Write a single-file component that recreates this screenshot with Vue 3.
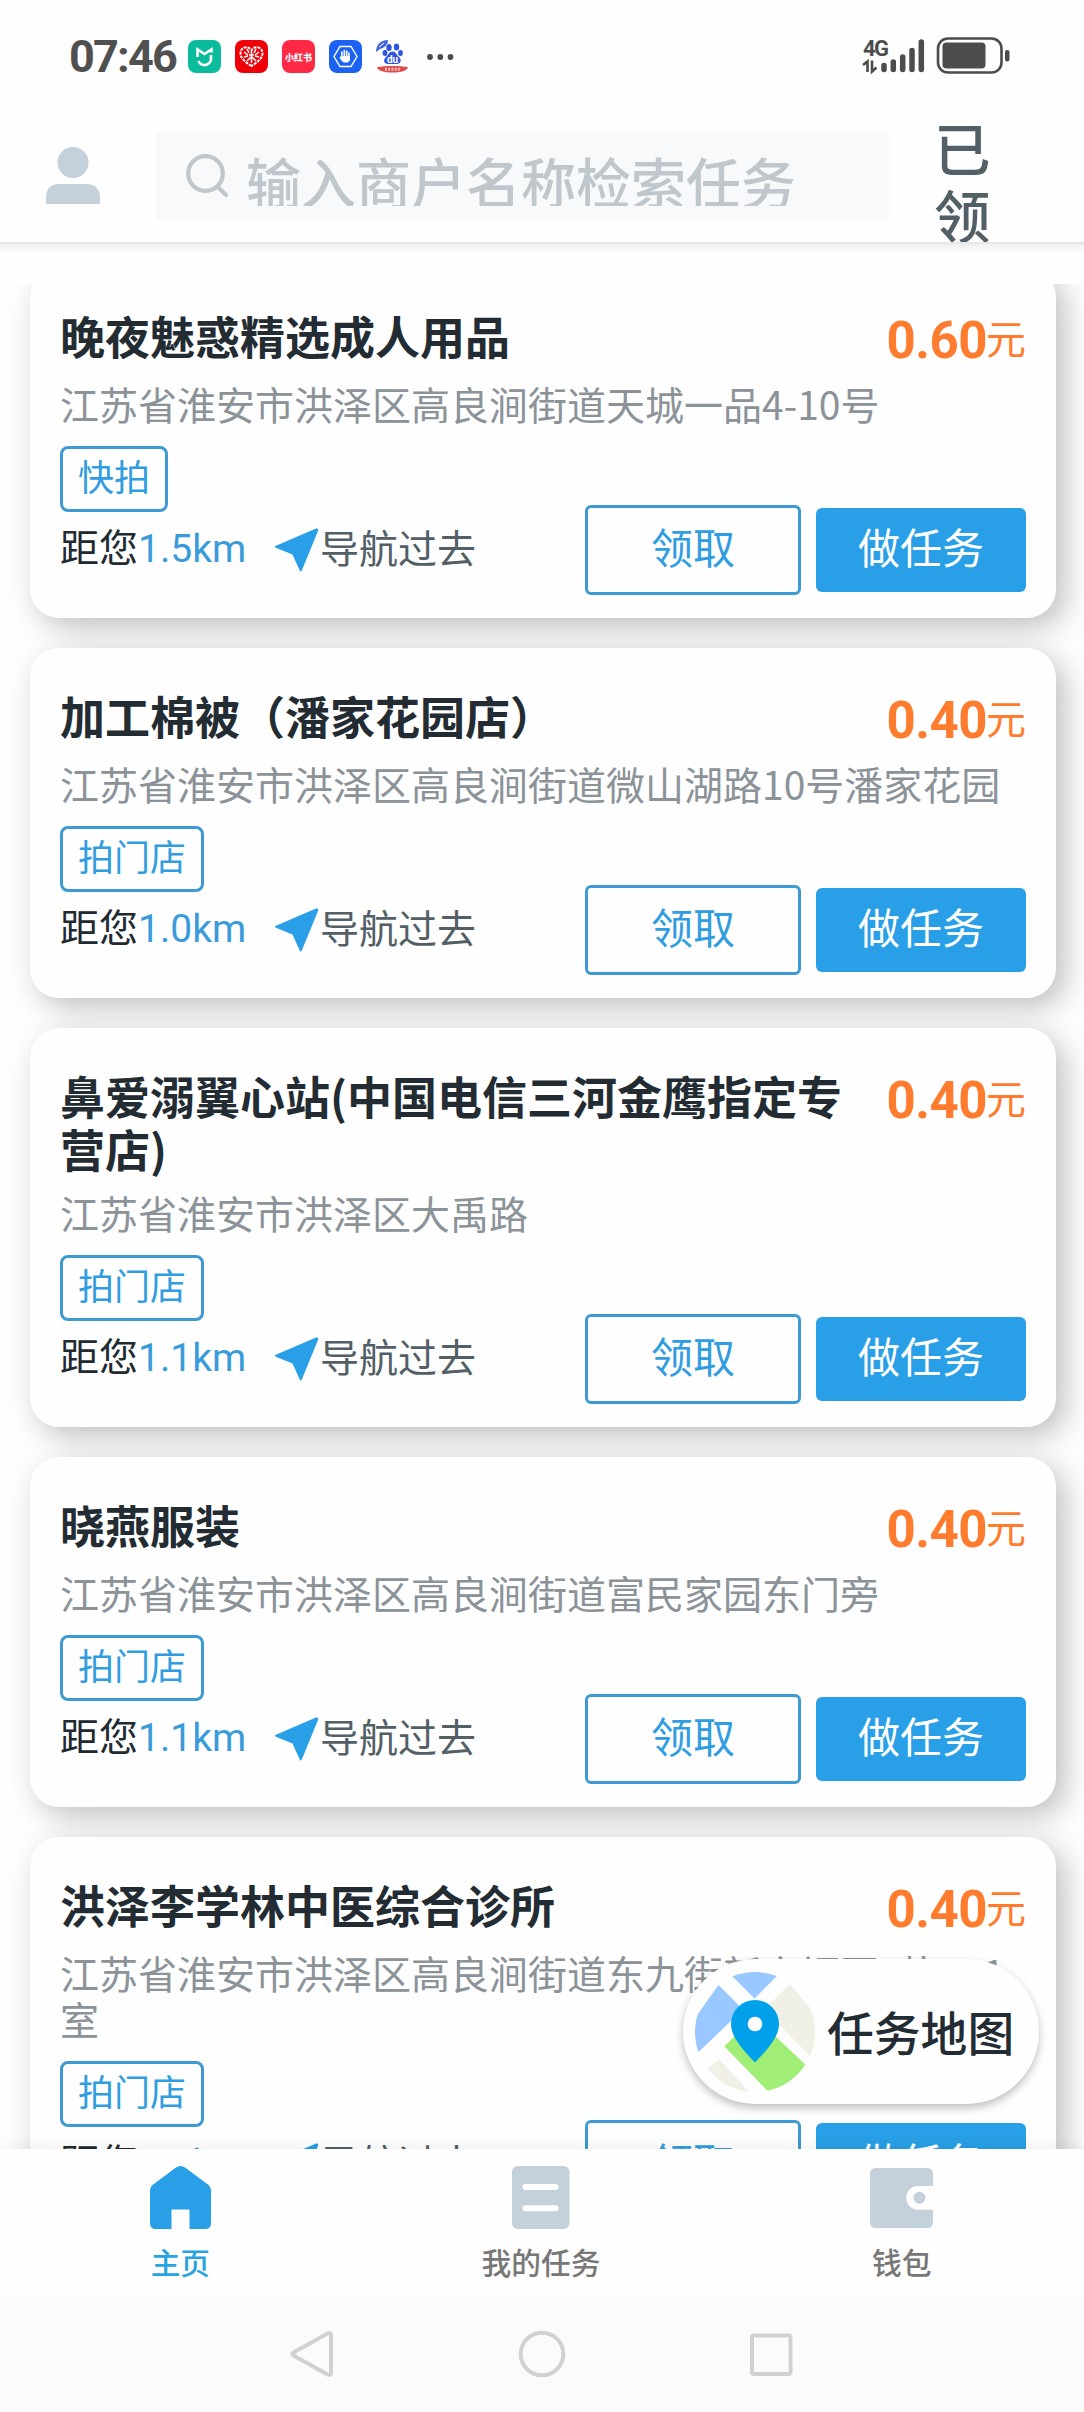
<script setup>
import { ref } from 'vue'

const keyword = ref('')
const activeTab = ref('home')

const tasks = ref([
  {
    id: 1,
    title: '晚夜魅惑精选成人用品',
    address: '江苏省淮安市洪泽区高良涧街道天城一品4-10号',
    tag: '快拍',
    distance: '1.5km',
    price: '0.60'
  },
  {
    id: 2,
    title: '加工棉被（潘家花园店）',
    address: '江苏省淮安市洪泽区高良涧街道微山湖路10号潘家花园',
    tag: '拍门店',
    distance: '1.0km',
    price: '0.40'
  },
  {
    id: 3,
    title: '鼻爱溺翼心站(中国电信三河金鹰指定专营店)',
    address: '江苏省淮安市洪泽区大禹路',
    tag: '拍门店',
    distance: '1.1km',
    price: '0.40'
  },
  {
    id: 4,
    title: '晓燕服装',
    address: '江苏省淮安市洪泽区高良涧街道富民家园东门旁',
    tag: '拍门店',
    distance: '1.1km',
    price: '0.40'
  },
  {
    id: 5,
    title: '洪泽李学林中医综合诊所',
    address: '江苏省淮安市洪泽区高良涧街道东九街新安福园4栋401室',
    tag: '拍门店',
    distance: '1.1km',
    price: '0.40'
  }
])
</script>

<template>
  <div class="page">
    <div class="status-bar">
      <span class="time">07:46</span>
      <div class="apps">
        <svg viewBox="0 0 33 33">
          <rect width="33" height="33" rx="8" fill="#0abb9c" />
          <path d="M9.5 17V9.5l7 4.5 7-4.5v3" fill="none" stroke="#fff" stroke-width="2.6" />
          <path d="M23 15v3a6.5 6.5 0 0 1-12.5 3" fill="none" stroke="#fff" stroke-width="2.6" />
        </svg>
        <svg viewBox="0 0 33 33">
          <rect width="33" height="33" rx="8" fill="#ee0008" />
          <path d="M16.5 26C9 21.5 5.5 17.5 5.5 13c0-6 8-8 11-2.5C19.5 5 27.5 7 27.5 13c0 4.5-3.5 8.5-11 13z" fill="none" stroke="#fff" stroke-width="2" stroke-dasharray="3 1" />
          <path d="M9 12l4 3M9 17l4-1M12 21l3-3M24 12l-4 3M24 17l-4-1M21 21l-3-3M12 9l2 4M21 9l-2 4M14 15h5M16.5 12v11M14.5 17.5h4" fill="none" stroke="#fff" stroke-width="1.5" />
        </svg>
        <svg viewBox="0 0 33 33">
          <rect width="33" height="33" rx="8" fill="#ff2845" />
          <text x="16.5" y="20.5" text-anchor="middle" class="xhs">小红书</text>
        </svg>
        <svg viewBox="0 0 33 33">
          <rect width="33" height="33" rx="8" fill="#1c62f2" />
          <path d="M11 6.5h11l6 10-6 10H11l-6-10z" fill="none" stroke="#fff" stroke-width="1.4" />
          <path d="M12.8 12v6M15.3 10.5v7M17.7 11v7M20 13v6" stroke="#fff" stroke-width="1.6" stroke-linecap="round" />
          <path d="M12 16h9v3c0 2-1.5 3.5-3.5 3.5h-1.5c-2 0-4-2-5.5-5z" fill="#fff" />
        </svg>
        <svg viewBox="0 0 33 33">
          <path d="M0 12C0 5 4 0 12 0c0 5-4 8-8 9z" fill="#4267dc" />
          <path d="M3 7l5-4" stroke="#fff" stroke-width="1" />
          <g fill="#2d55df">
            <ellipse cx="13" cy="7.5" rx="2.7" ry="3.5" />
            <ellipse cx="20.5" cy="7" rx="2.7" ry="3.5" />
            <ellipse cx="9" cy="13" rx="2.4" ry="3" />
            <ellipse cx="24.5" cy="13" rx="2.4" ry="3" />
            <path d="M16.5 11.5c3 0 4 3 6 5 4 3 2 7.5-1.5 7.5h-9c-4 0-5.5-4.5-1.5-7.5 2-2 3-5 6-5z" />
          </g>
          <text x="16.5" y="22.5" text-anchor="middle" class="du">du</text>
          <path d="M1 27c9-1.5 22-1.5 31 0-1 4-7 5.5-15.5 5.5S2 31 1 27z" fill="#dd4b4b" />
          <path d="M9 29.2h15" stroke="#fff" stroke-width="3" stroke-dasharray="2 1.2" opacity=".6" />
        </svg>
      </div>
      <svg class="dots" viewBox="0 0 28 8">
        <circle cx="4" cy="4" r="2.9" />
        <circle cx="14.3" cy="4" r="2.9" />
        <circle cx="24.5" cy="4" r="2.9" />
      </svg>
      <svg class="signal" viewBox="0 0 150 40">
        <text x="0" y="18.5" class="net">4G</text>
        <path d="M0 28l4.5-3.5V35M9 23.5v11l4.5-4" fill="none" stroke="#4c4c4c" stroke-width="2.6" />
        <g stroke="#4c4c4c" stroke-width="5.5" stroke-linecap="round">
          <path d="M21 28.5v4M30.3 25v7.5M39.7 20v12.5M49 13.5v19M58.3 5v27.5" />
        </g>
        <rect x="75" y="1.5" width="63.5" height="34" rx="10" fill="none" stroke="#4c4c4c" stroke-width="2.6" />
        <rect x="79.5" y="5.5" width="43" height="26" rx="4" fill="#4c4c4c" />
        <rect x="142" y="13" width="4.5" height="11.5" rx="2" fill="#4c4c4c" />
      </svg>
    </div>

    <div class="header">
      <svg class="user" viewBox="0 0 54 58">
        <circle cx="27" cy="15.5" r="15.5" />
        <path d="M0 56V51c0-9 5-14 13-14h28c8 0 13 5 13 14v5q0 1-1 1H1q-1 0-1-1z" />
      </svg>
      <label class="search">
        <svg class="search-icon" viewBox="0 0 44 44">
          <circle cx="19.5" cy="19.5" r="17.3" />
          <path d="M31.5 32.5l8.5 8.5" />
        </svg>
        <input v-model="keyword" placeholder="输入商户名称检索任务" />
      </label>
      <div class="claimed">已领</div>
    </div>

    <div class="list">
      <div class="card" v-for="t in tasks" :key="t.id">
        <div class="title-row">
          <h2>{{ t.title }}</h2>
          <div class="price"><b>{{ t.price }}</b><span>元</span></div>
        </div>
        <p class="address">{{ t.address }}</p>
        <span class="tag">{{ t.tag }}</span>
        <div class="bottom">
          <div class="distance">距您<span>{{ t.distance }}</span></div>
          <div class="navigate">
            <svg viewBox="0 0 44 44"><path d="M41 .5Q44 0 43 3L27 42q-1.5 3-2.5 0L17.5 26.5 1.5 20q-3-1.5 0-2.5z" /></svg>
            <span>导航过去</span>
          </div>
          <button class="claim">领取</button>
          <button class="start">做任务</button>
        </div>
      </div>
    </div>

    <div class="map-button">
      <svg viewBox="0 0 120 120">
        <defs>
          <clipPath id="mapClip"><circle cx="60" cy="60" r="60" /></clipPath>
        </defs>
        <g clip-path="url(#mapClip)">
          <path d="M33 0l26.5 26.5L86 0z" fill="#98c8ff" />
          <path d="M23.5 13L48 37.5 3.5 80-10 60z" fill="#98c8ff" />
          <path d="M95 12L69 37.5 115 84l15-30z" fill="#f0f0e7" />
          <path d="M29.3 74.3L60 45l50 47.3L100 125H78.5z" fill="#a0ee76" />
          <path d="M24.3 87.3L12.7 97 30 125h29z" fill="#f0f0e7" />
        </g>
        <path d="M60 90.5C50 80 36 66 36 52a24 24 0 0 1 48 0c0 14-14 28-24 38.5z" fill="#00a0ea" />
        <circle cx="60" cy="52" r="7.3" fill="#fff" />
      </svg>
      <span>任务地图</span>
    </div>

    <div class="tabs">
      <div class="tab" :class="{ active: activeTab === 'home' }" @click="activeTab = 'home'">
        <svg viewBox="0 0 63 63"><path d="M27 1.5q4.5-3 9 0L59.5 19q2.5 2 2.5 5v33q0 6-6 6H40.5V43.5h-18V63H7q-6 0-6-6V24q0-3 2.5-5z" /></svg>
        <span>主页</span>
      </div>
      <div class="tab" :class="{ active: activeTab === 'tasks' }" @click="activeTab = 'tasks'">
        <svg viewBox="0 0 63 63">
          <rect x="3" width="57.5" height="63" rx="6" />
          <path class="line" d="M16.5 21h30M16.5 42.3h30" />
        </svg>
        <span>我的任务</span>
      </div>
      <div class="tab" :class="{ active: activeTab === 'wallet' }" @click="activeTab = 'wallet'">
        <svg viewBox="0 0 63 63">
          <path d="M6 2h51q6 0 6 6v12H48a11.8 11.8 0 0 0 0 23.7h15V56q0 6-6 6H6q-6 0-6-6V8q0-6 6-6z" />
          <circle cx="49.5" cy="31.8" r="6" />
        </svg>
        <span>钱包</span>
      </div>
    </div>

    <div class="system-nav">
      <svg viewBox="0 0 50 50"><path d="M39.5 4.5q3.5-1.5 3.5 2v37q0 3.5-3.5 2L5.5 26.5q-2.5-1.5 0-3z" /></svg>
      <svg viewBox="0 0 50 50"><circle cx="25" cy="25" r="21.3" /></svg>
      <svg viewBox="0 0 50 50"><rect x="6" y="6.5" width="38.5" height="38.5" rx="2" /></svg>
    </div>
  </div>
</template>

<style>
body {
  margin: 0;
  background: #fff;
}
</style>

<style scoped>
.page {
  position: relative;
  display: flex;
  flex-direction: column;
  width: 1084px;
  height: 2412px;
  overflow: hidden;
  background: #fefefe;
  font-family: "Noto Sans CJK SC", sans-serif;
}

.page * {
  box-sizing: border-box;
}

.status-bar {
  display: flex;
  align-items: center;
  flex: none;
  height: 113px;
  padding: 0 71px 0 69px;
}

.time {
  width: 119px;
  font: bold 45px/50px Roboto, sans-serif;
  color: #505050;
  letter-spacing: -1.8px;
}

.apps {
  display: flex;
  gap: 14px;
}

.apps svg {
  width: 33px;
  height: 33px;
}

.xhs {
  font-size: 9px;
  font-weight: 900;
  fill: #fff;
}

.du {
  font: bold 10px Roboto, sans-serif;
  fill: #fff;
}

.dots {
  width: 28px;
  height: 8px;
  margin-left: 17px;
  fill: #4c4c4c;
}

.signal {
  width: 150px;
  height: 40px;
  margin-left: auto;
  overflow: visible;
}

.net {
  font: bold 22px Roboto, sans-serif;
  letter-spacing: -1.5px;
  fill: #4c4c4c;
}

.header {
  position: relative;
  z-index: 2;
  display: flex;
  flex: none;
  height: 129px;
  padding-left: 46px;
  background: #fefefe;
}

.header::after {
  content: '';
  position: absolute;
  top: 129px;
  left: 0;
  width: 100%;
  height: 12px;
  background: linear-gradient(#e4e4e4, #f2f2f2 30%, #fefefe);
}

.user {
  width: 54px;
  height: 58px;
  margin-top: 34px;
  fill: #c4d1da;
}

.search {
  display: flex;
  width: 733px;
  height: 90px;
  margin: 18px 0 0 56px;
  padding-left: 30px;
  background: #f7f9fb;
  border-radius: 6px;
}

.search-icon {
  width: 44px;
  height: 44px;
  margin-top: 23px;
  fill: none;
  stroke: #bfc7cd;
  stroke-width: 4.2;
  stroke-linecap: round;
}

.search input {
  flex: 1;
  height: 60px;
  margin: 15px 0 0 16px;
  padding: 8px 0 0;
  border: 0;
  outline: 0;
  background: none;
  font: 500 55px/60px "Noto Sans CJK SC", sans-serif;
}

.search input::placeholder {
  color: #bfc7cd;
  opacity: 1;
}

.claimed {
  width: 58px;
  height: 129px;
  margin-left: 45px;
  overflow: hidden;
  font-size: 56.5px;
  font-weight: 500;
  line-height: 67px;
  color: #525f66;
}

.list {
  display: flex;
  flex: none;
  flex-direction: column;
  gap: 30px;
  height: 1865px;
  margin-top: 42px;
  overflow: hidden;
}

.card {
  flex: none;
  width: 1026px;
  margin-left: 30px;
  padding: 42px 30px 23px;
  background: #fefefe;
  border-radius: 29px;
  box-shadow: 9px 9px 30px rgba(0, 0, 0, .25);
}

/* the list is scrolled a little past the first card's top */
.card:first-child {
  margin-top: -16px;
}

.title-row {
  display: flex;
  align-items: flex-start;
  justify-content: space-between;
  min-height: 56px;
}

.title-row h2 {
  width: 800px;
  margin: 0;
  font-size: 45px;
  font-weight: bold;
  line-height: 52.5px;
  color: #232c33;
}

.price {
  display: flex;
  height: 56px;
  font-size: 40px;
  color: #ff7c2f;
}

.price b {
  padding-top: 2px;
  font: bold 51px/57px Roboto, sans-serif;
  letter-spacing: -.5px;
}

.price span {
  margin-left: -1px;
  line-height: 54px;
}

.address {
  margin: 14px 0 20px;
  font-size: 39px;
  line-height: 46px;
  color: #8b9399;
}

.tag {
  display: block;
  width: max-content;
  height: 66px;
  padding: 0 15px;
  border: 3px solid #3d9ad3;
  border-radius: 8px;
  font-size: 36px;
  line-height: 53px;
  color: #309de0;
}

.bottom {
  display: flex;
  align-items: center;
  height: 90px;
  margin-top: -7px;
}

.distance {
  width: 215px;
  padding-bottom: 6px;
  font-size: 39px;
  line-height: 46px;
  color: #212a30;
  white-space: nowrap;
}

.distance span {
  font-family: Roboto, sans-serif;
  color: #399bd9;
}

.navigate {
  display: flex;
  align-items: center;
  width: 310px;
  padding-bottom: 9px;
  font-size: 39px;
  line-height: 46px;
  color: #535f66;
}

.navigate svg {
  width: 44px;
  height: 44px;
  margin: 8px 1px 0 0;
  fill: #289fe6;
}

button {
  padding: 0 0 9px;
  border: 0;
  border-radius: 6px;
  font: 42px/46px "Noto Sans CJK SC", sans-serif;
}

.claim {
  width: 216px;
  height: 90px;
  background: none;
  border: 3px solid #3d9ad3;
  color: #309de0;
}

.start {
  width: 210px;
  height: 84px;
  margin-left: 15px;
  background: #289fe6;
  color: #fff;
}

.map-button {
  position: absolute;
  top: 1959px;
  left: 683px;
  z-index: 3;
  display: flex;
  align-items: center;
  width: 356px;
  height: 145px;
  padding-left: 12px;
  background: #fefefe;
  border-radius: 73px;
  box-shadow: 0 4px 9px rgba(0, 0, 0, .25);
}

.map-button svg {
  width: 120px;
  height: 120px;
}

.map-button span {
  margin: 0 0 1px 12px;
  font-size: 46.8px;
  font-weight: 500;
  line-height: 50px;
  color: #232c33;
}

.tabs {
  position: relative;
  z-index: 2;
  display: grid;
  grid-template-columns: repeat(3, 1fr);
  flex: none;
  height: 147px;
  padding-right: 2px;
  background: #fefefe;
  box-shadow: 0 -4px 14px rgba(0, 0, 0, .05);
}

.tab {
  display: flex;
  flex-direction: column;
  align-items: center;
  padding-top: 17px;
  color: #777;
}

.tab svg {
  width: 63px;
  height: 63px;
  fill: #c4d1da;
}

.tab.active svg {
  fill: #289fe6;
}

.tab.active {
  color: #28a3e2;
}

.tab .line {
  fill: none;
  stroke: #fff;
  stroke-width: 6;
  stroke-linecap: round;
}

.tab span {
  margin-top: 15px;
  font-size: 29.7px;
  font-weight: 500;
  line-height: 36px;
}

.system-nav {
  position: relative;
  z-index: 2;
  display: flex;
  justify-content: center;
  gap: 179px;
  flex: none;
  height: 116px;
  padding-top: 33px;
  background: #fbfbfb;
}

.system-nav svg {
  width: 50px;
  height: 50px;
  fill: none;
  stroke: #d1d1d1;
  stroke-width: 4;
}
</style>
